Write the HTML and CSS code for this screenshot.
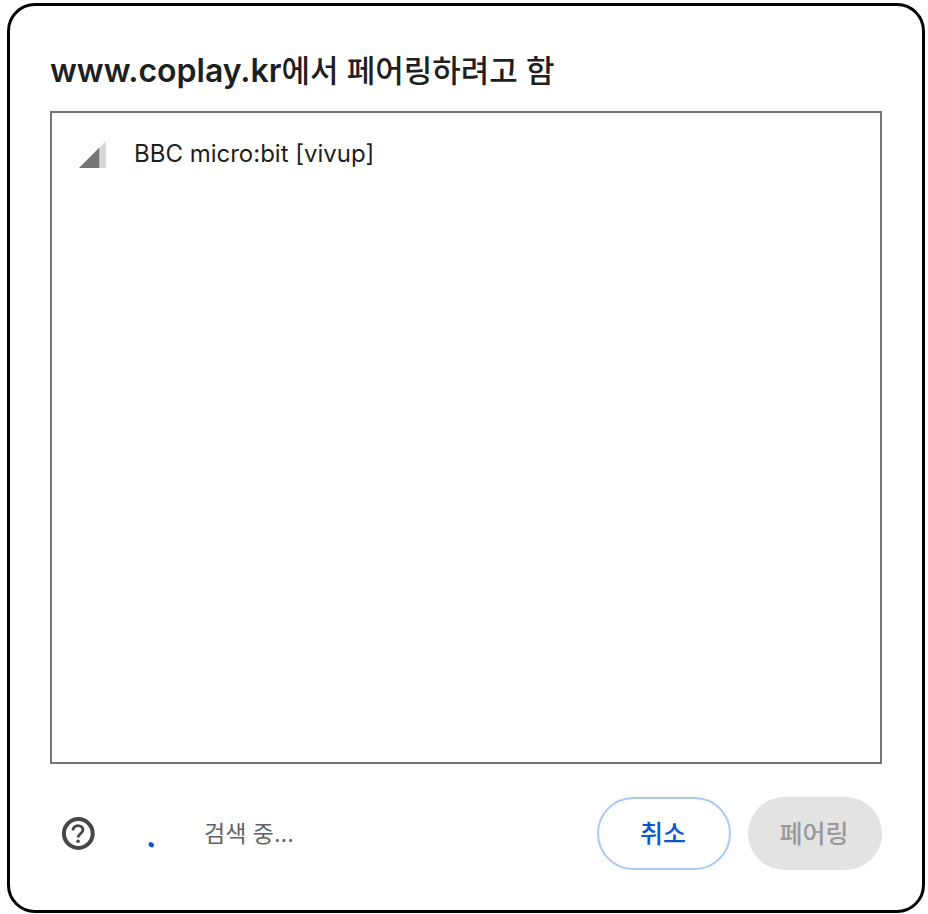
FILE: index.html
```
<!DOCTYPE html>
<html lang="ko">

<head>
    <meta charset="UTF-8">
    <meta name="viewport" content="width=device-width, initial-scale=1.0">
    <title>www.coplay.kr에서 페어링하려고 함</title>
    <link rel="stylesheet" href="styles.css">
</head>

<body>
    <main class="dialog" role="dialog" aria-labelledby="dialog-title">
        <h1 class="title" id="dialog-title"><span class="origin">www.coplay.kr</span>에서 페어링하려고 함</h1>

        <ul class="device-list">
            <li class="device">
                <svg class="signal" viewBox="0 0 28 28" aria-hidden="true">
                    <path d="M0 28L28 0V28Z" fill="#d6d6d6" />
                    <path d="M0 28L21 7V28Z" fill="#757575" />
                </svg>
                <span>BBC micro:bit [vivup]</span>
            </li>
        </ul>

        <div class="footer">
            <button class="help" type="button" aria-label="도움말">
                <svg viewBox="0 0 40 40" fill="none" stroke="#474747" aria-hidden="true">
                    <circle cx="20.300" cy="19.500" r="14.400" stroke-width="4" />
                    <path d="M15 16.500C15 13.200 17.200 11.700 20 11.700C22.900 11.700 25 13.500 25 16C25 19.500 20.100 19.600 20.100 23.500" stroke-width="2.800" />
                    <circle cx="20.100" cy="27.200" r="1.800" fill="#474747" stroke="none" />
                </svg>
            </button>
            <svg class="spinner" viewBox="0 0 32 32" aria-hidden="true">
                <path d="M7.800 26.500L8.800 27" fill="none" stroke="#0b57d0" stroke-width="4.600" stroke-linecap="round" />
            </svg>
            <span class="status">검색 중...</span>
            <div class="buttons">
                <button class="btn btn-cancel" type="button">취소</button>
                <button class="btn btn-pair" type="button" disabled>페어링</button>
            </div>
        </div>
    </main>
</body>

</html>
```
FILE: styles.css
```
* {
    margin: 0;
    padding: 0;
    box-sizing: border-box;
}

body {
    display: flex;
    min-height: 100vh;
    padding: 3px 3px 1px 7px;
    background-color: #fff;
    color: #1f1f1f;
    font-family: Inter, "Noto Sans CJK KR", sans-serif;
}

.dialog {
    display: flex;
    flex: 1;
    flex-direction: column;
    padding: 40px;
    border: 3px solid #000;
    border-radius: 28px;
}

.title {
    margin-bottom: 15px;
    font-size: 31px;
    font-weight: 500;
    line-height: 50px;
}

.origin {
    font-size: 32px;
    font-weight: 600;
}

.device-list {
    flex: 1;
    padding: 17px 0;
    border: 2px solid #757575;
    list-style: none;
}

.device {
    display: flex;
    align-items: center;
    gap: 28px;
    padding: 8px 27px;
    font-size: 24px;
    line-height: 32px;
}

.signal {
    width: 27px;
    height: 27px;
}

.footer {
    display: flex;
    align-items: center;
    margin-top: 33px;
    padding-left: 8px;
}

.help {
    width: 40px;
    height: 40px;
    border: none;
    background: none;
    cursor: pointer;
}

.help svg {
    display: block;
    width: 40px;
    height: 40px;
}

.spinner {
    width: 32px;
    height: 32px;
    margin-left: 45px;
}

.status {
    margin-left: 29px;
    color: #5f6368;
    font-size: 23px;
    line-height: 32px;
}

.buttons {
    display: flex;
    gap: 17px;
    margin-left: auto;
}

.btn {
    width: 134px;
    height: 73px;
    padding: 0 2px 3px 0;
    border: none;
    border-radius: 37px;
    font-family: inherit;
    font-size: 25px;
    font-weight: 500;
    cursor: pointer;
}

.btn-cancel {
    border: 2px solid #a8c7fa;
    background-color: #fff;
    color: #0b57d0;
}

.btn-pair {
    background-color: #e3e3e3;
    color: #999;
    cursor: default;
}
```
